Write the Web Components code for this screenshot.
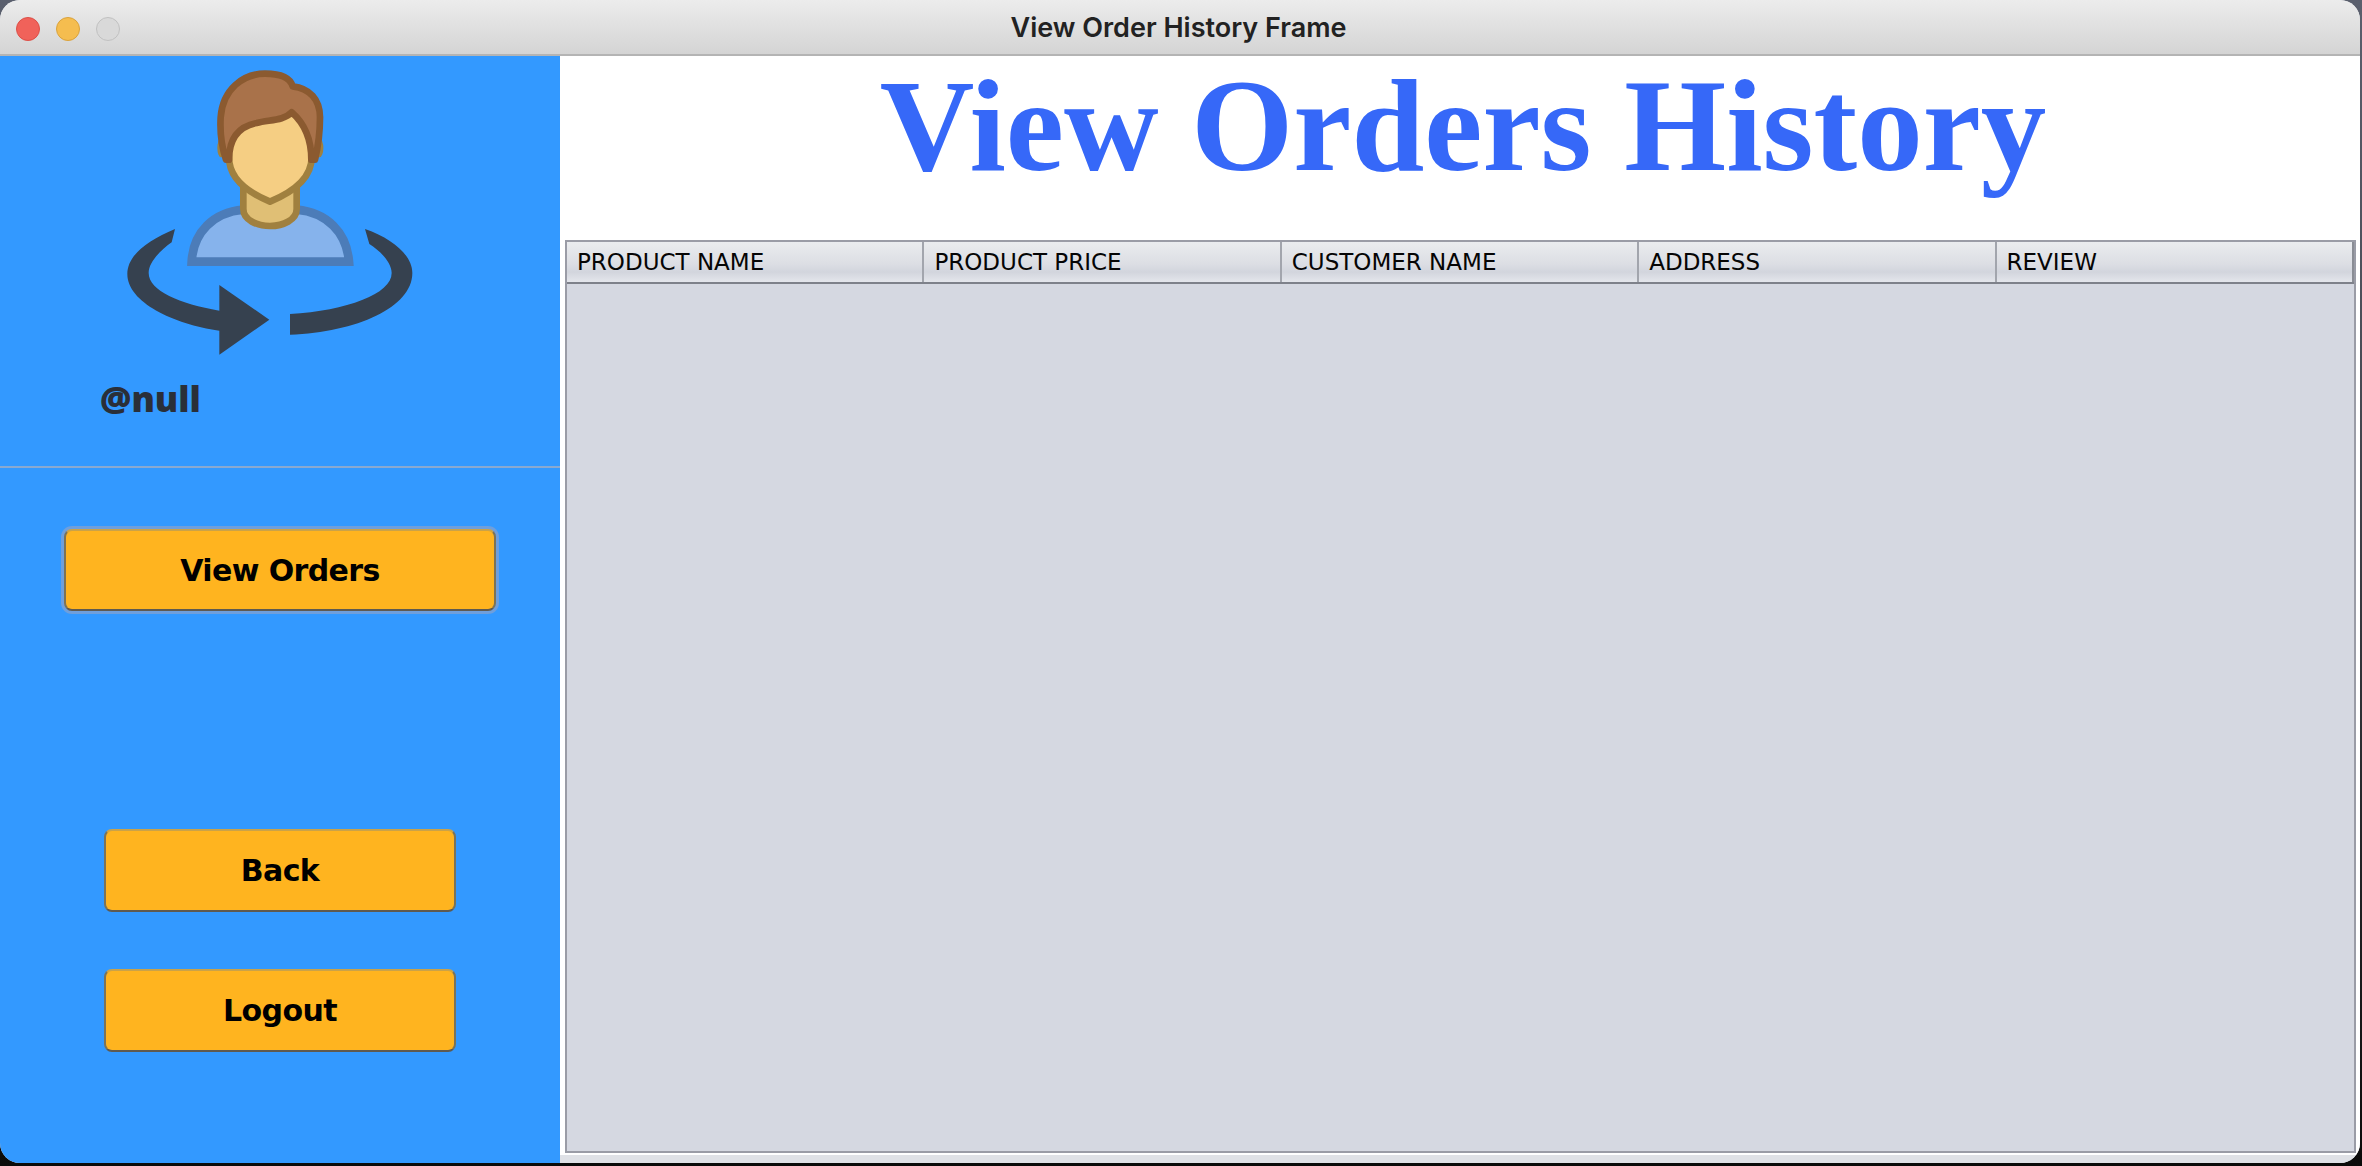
<!DOCTYPE html>
<html lang="en">
<head>
<meta charset="utf-8">
<title>View Order History Frame</title>
<style>
html,body{margin:0;height:100%;overflow:hidden}
body{background:linear-gradient(#5a5f6d 0,#4a4d57 30%,#0b0b0a 100%)}
</style>
</head>
<body>
<app-window heading="View Order History Frame">
  <side-bar slot="side" user="@null">
    <action-button slot="primary" focused>View Orders</action-button>
    <action-button slot="secondary">Back</action-button>
    <action-button slot="secondary">Logout</action-button>
  </side-bar>
  <orders-view title-text="View Orders History">
    <orders-table columns="PRODUCT NAME|PRODUCT PRICE|CUSTOMER NAME|ADDRESS|REVIEW"></orders-table>
  </orders-view>
</app-window>
<script>
function def(name, html, init){
  customElements.define(name, class extends HTMLElement{
    constructor(){super();this.attachShadow({mode:'open'}).innerHTML=html;}
    connectedCallback(){if(init)init(this,this.shadowRoot);}
  });
}
def('app-window',`<style>
:host{display:flex;flex-direction:column;box-sizing:border-box;width:2360px;height:1163px;border-radius:20px;overflow:hidden;background:#dfe1e6}
.bar{flex:none;height:56px;box-sizing:border-box;display:flex;align-items:center;position:relative;background:linear-gradient(#ececec,#d4d4d4);border-bottom:2px solid #b4b4b4}
.lights{display:flex;gap:16px;padding:3px 0 0 16px}
.lights i{box-sizing:border-box;width:24px;height:24px;border-radius:50%;border:1px solid}
.r{background:#f0625a;border-color:#dc4f47!important}
.y{background:#f5bd4f;border-color:#d9a23c!important}
.g{background:#d9d9d9;border-color:#c0c0c0!important}
.t{flex:1;text-align:center;font:600 27px Inter,"Liberation Sans",sans-serif;color:#222;margin-left:-123px}
.body{flex:1;min-height:0;display:flex}
</style>
<div class="bar"><div class="lights"><i class="r"></i><i class="y"></i><i class="g"></i></div><div class="t"></div></div>
<div class="body"><slot name="side"></slot><slot></slot></div>`,
(h,s)=>{s.querySelector('.t').textContent=h.getAttribute('heading')});

def('user-avatar',`<style>
:host{display:block;width:340px;height:300px;margin-left:100px}
svg{display:block}
</style>
<svg width="340" height="300" viewBox="0 21 1020 900" aria-label="user">
<ellipse cx="363" cy="297" rx="11" ry="28" fill="#a0803f"/>
<ellipse cx="659" cy="297" rx="11" ry="28" fill="#a0803f"/>
<path d="M275 638C280 550 340 490 430 482L590 482C680 490 740 550 747 638Z" fill="#86b3ec" stroke="#4c7cb8" stroke-width="26"/>
<path d="M430 410L430 480C430 512 470 531 510 531C550 531 590 512 590 480L590 410Z" fill="#e0bf75" stroke="#a0803f" stroke-width="20"/>
<path d="M387 240L387 325C387 380 430 425 510 458C590 425 635 380 635 325L635 240L575 170L430 190Z" fill="#f5ce83"/>
<path d="M387 300L387 325C387 380 430 425 510 458C590 425 635 380 635 325L635 300" fill="none" stroke="#a0803f" stroke-width="20" stroke-linejoin="round"/>
<path d="M378 332C362 285 360 240 362 205C368 120 430 74 495 74C540 74 570 85 578 112C628 118 660 150 660 205C660 250 655 290 645 332L634 332C634 275 615 225 575 190C552 215 510 212 470 222C420 232 387 265 387 332Z" fill="#a9724a" stroke="#8b5a30" stroke-width="20" stroke-linejoin="round"/>
<path d="M225 540C140 575 82 620 82 675C82 760 220 825 358 845L358 917L508 812L358 708L358 785C240 765 146 725 146 672C146 640 180 605 215 580Z" fill="#36414f"/>
<path d="M795 540C880 570 937 620 937 672C937 775 770 850 570 857L570 795C740 785 875 735 875 672C875 640 840 605 808 585Z" fill="#36414f"/>
</svg>`);

def('side-bar',`<style>
:host{display:flex;flex-direction:column;flex:none;width:560px;height:100%;background:#3399ff}
.name{font:800 35px "Open Sans","Noto Sans",sans-serif;line-height:48px;color:#2a2f38;margin:19px 0 0 100px;height:91px}
hr{margin:0;border:0;height:2px;background:#8aa9d0;flex:none}
.primary{display:flex;justify-content:center;margin-top:61px}
.secondary{display:flex;flex-direction:column;align-items:center;gap:57px;margin-top:218px}
::slotted([slot=primary]){--w:432px;--h:82px}
::slotted([slot=secondary]){--w:352px;--h:83px}
</style>
<user-avatar></user-avatar>
<div class="name"></div>
<hr>
<div class="primary"><slot name="primary"></slot></div>
<div class="secondary"><slot name="secondary"></slot></div>`,
(h,s)=>{s.querySelector('.name').textContent=h.getAttribute('user')});

def('action-button',`<style>
:host{display:flex;box-sizing:border-box;width:var(--w);height:var(--h);align-items:center;justify-content:center;
background:#ffb41f;border:2px solid #c8973a;border-bottom-color:#5f5a50;border-left-color:#7b7358;border-right-color:#7b7358;border-top-color:#c9a24a;border-radius:8px;
font:700 30px "DejaVu Sans",sans-serif;letter-spacing:-.6px;color:#000;cursor:default}
:host([focused]){box-shadow:0 0 0 3px #6f9fdc}
</style><slot></slot>`);

def('orders-view',`<style>
:host{flex:1;display:flex;flex-direction:column;min-width:0;height:100%}
.head{flex:none;height:184px;background:#fff;box-sizing:border-box;text-align:center;font:700 131px "Liberation Serif",serif;line-height:140px;color:#3668f8;padding-left:6px}
.wrap{background:#fff;padding:0 4px 2px 5px;flex:none;height:915px;box-sizing:border-box}
.foot{flex:1;background:#dfe1e6}
</style>
<div class="head"></div>
<div class="wrap"><slot></slot></div>
<div class="foot"></div>`,
(h,s)=>{s.querySelector('.head').textContent=h.getAttribute('title-text')});

def('orders-table',`<style>
:host{display:flex;flex-direction:column;box-sizing:border-box;height:100%;border:2px solid #9a9ca6;background:#d5d8e1}
.cols{flex:none;height:40px;display:grid;grid-template-columns:repeat(5,1fr);box-sizing:content-box;border-bottom:2px solid #7e818a;
background:linear-gradient(#eaecef 0,#dcdee4 55%,#d2d5dd 75%,#e4e6ec 100%)}
</style><div class="cols"></div>`,
(h,s)=>{const c=s.querySelector('.cols');h.getAttribute('columns').split('|').forEach((t,i,a)=>{const e=document.createElement('header-cell');e.textContent=t;if(i===a.length-1)e.setAttribute('last','');c.appendChild(e);});});

def('header-cell',`<style>
:host{display:flex;align-items:center;box-sizing:border-box;padding-left:10px;border-right:2px solid #a2a5ad;font:23px "DejaVu Sans",sans-serif;color:#050505;white-space:nowrap}
:host([last]){border-right-color:#8a8d95}
</style><slot></slot>`);
</script>
</body>
</html>
